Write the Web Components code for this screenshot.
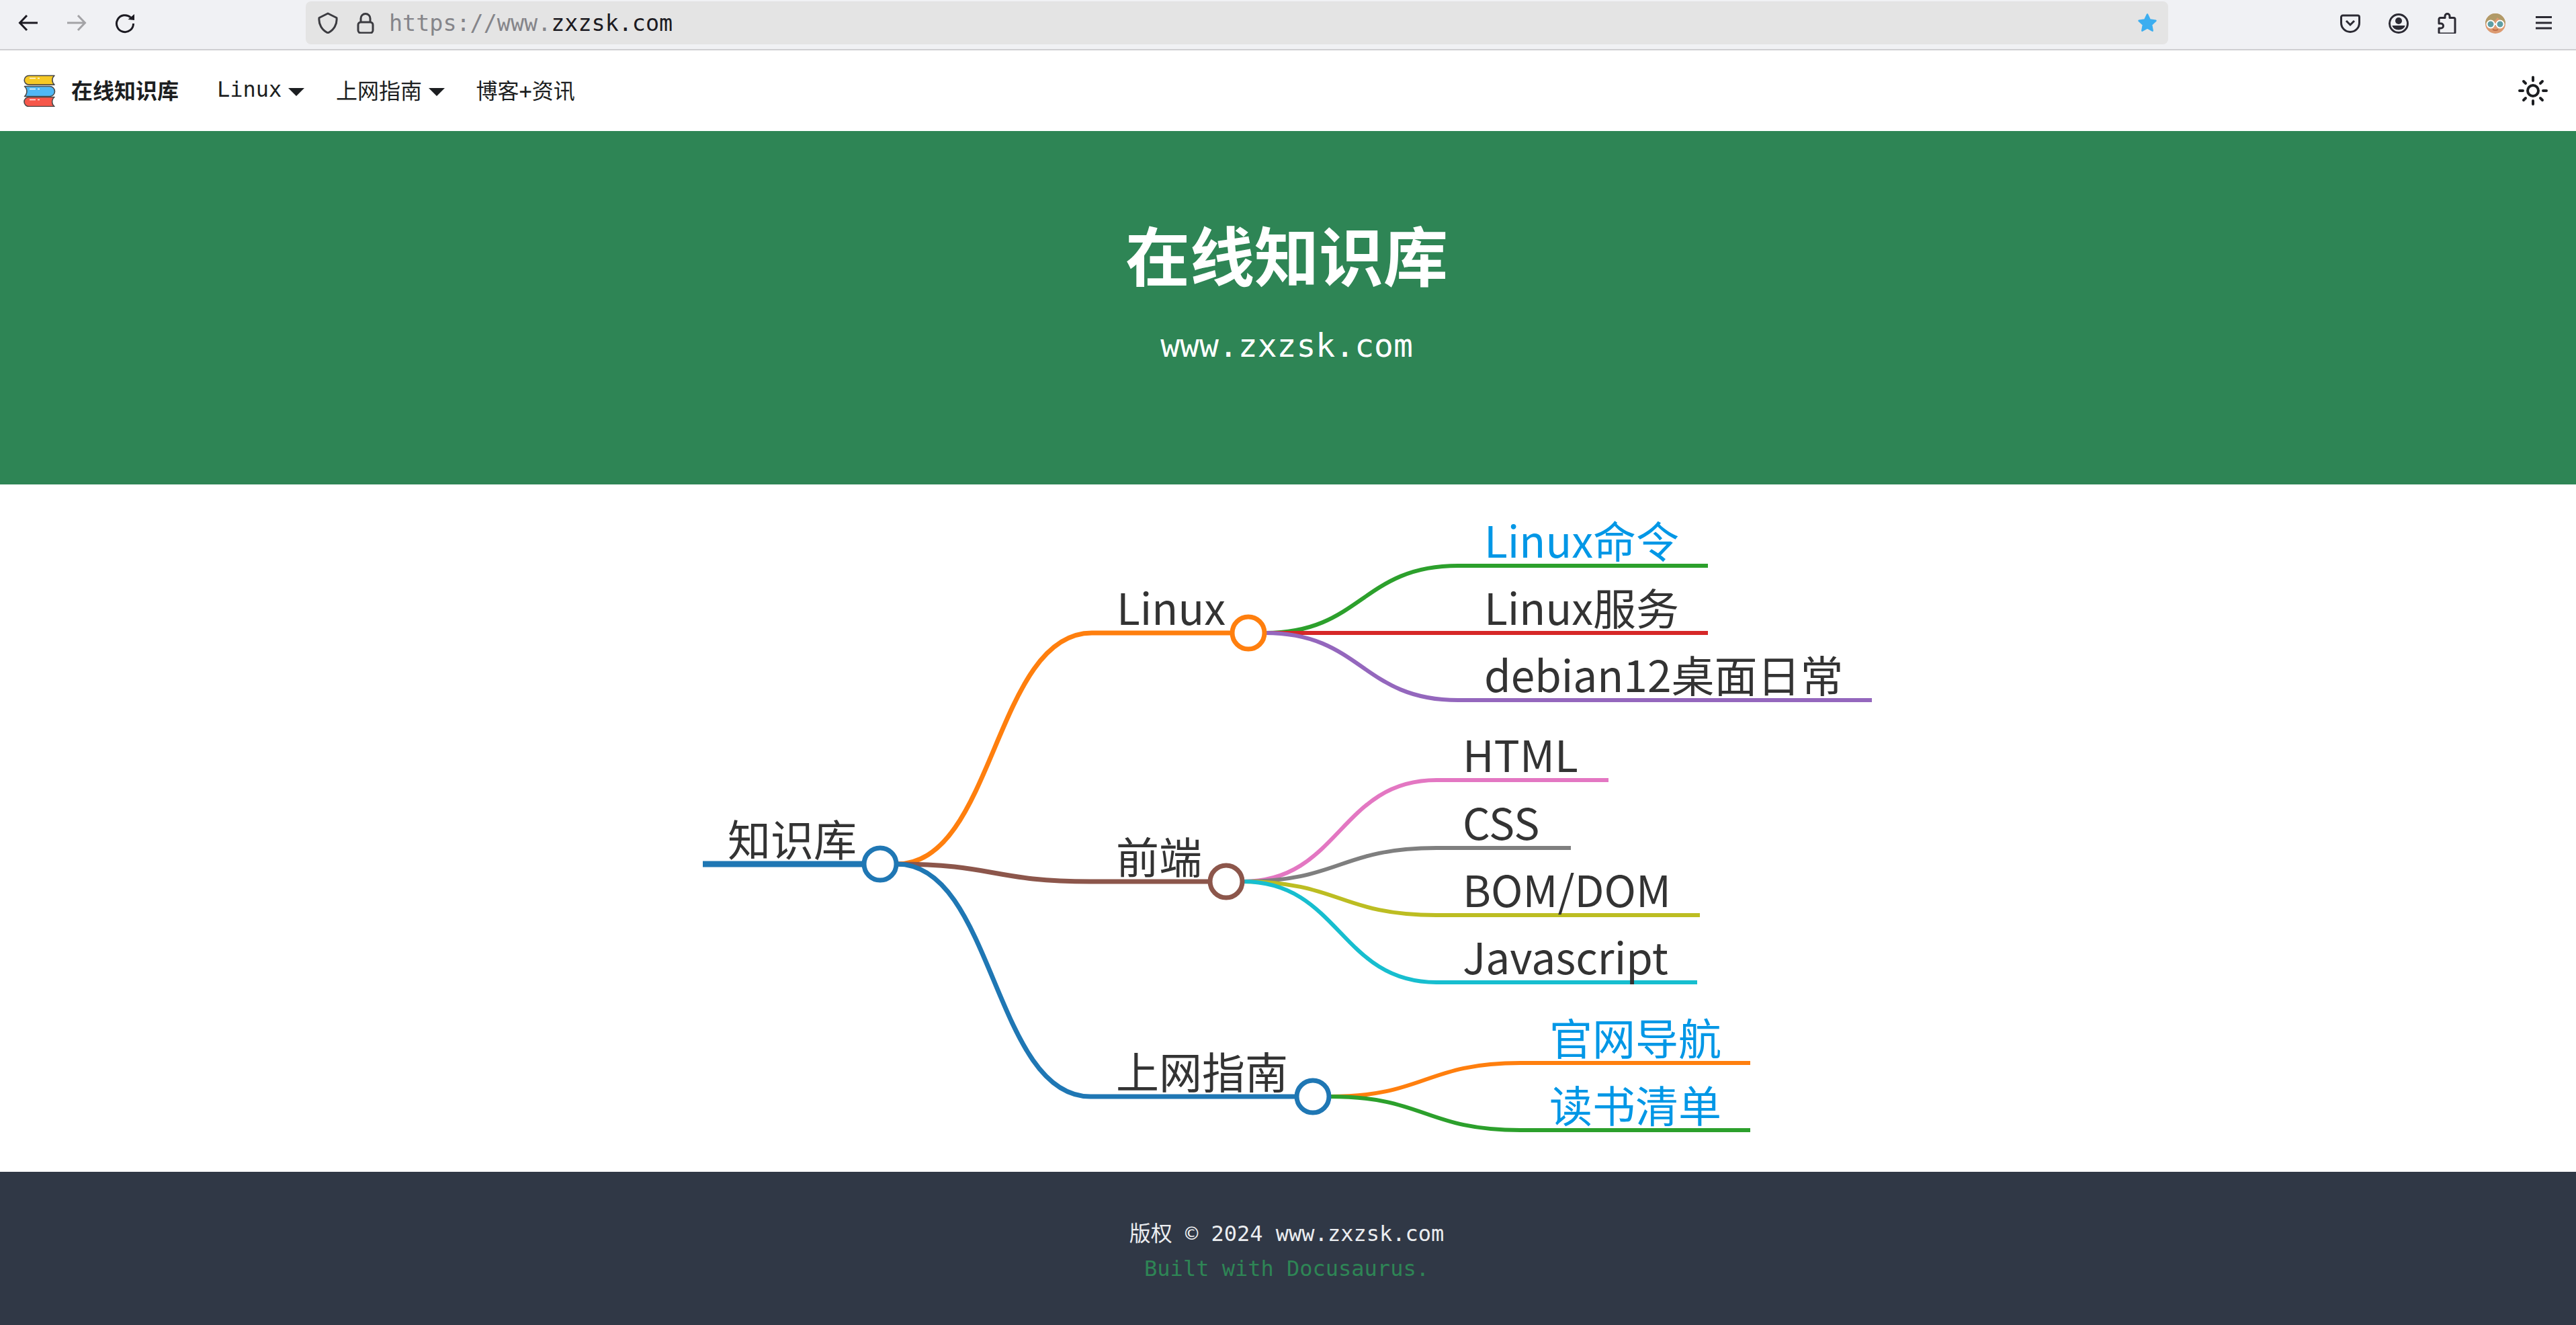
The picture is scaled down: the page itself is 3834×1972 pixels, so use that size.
<!DOCTYPE html>
<html lang="zh-CN">

<head>
    <meta charset="UTF-8">
    <meta name="viewport" content="width=device-width, initial-scale=1.0">
    <title>在线知识库</title>
</head>
<style>
    * {
        box-sizing: border-box;
    }
    html, body {
        margin: 0;
        background: #fff;
    }
    body {
        --mono: "DejaVu Sans Mono", "Noto Sans CJK SC", monospace;
        --cjk: "Noto Sans CJK SC", "Noto Sans", sans-serif;
        --primary: #2e8555;
        font-family: var(--mono);
        height: 1972px;
        display: flex;
        flex-direction: column;
        overflow: hidden;
    }
</style>

<body>
    <template class="browser-bar-tpl">
        <style>
            :host {
                display: flex;
                align-items: flex-start;
                height: 75px;
                flex-shrink: 0;
                background: #f0f1f4;
                border-bottom: 2px solid #cfcfd2;
                padding: 2px 32px 0 26px;
            }
            .group {
                display: flex;
                gap: 40px;
                height: 64px;
                align-items: center;
            }
            .url {
                flex: 1;
                height: 64px;
                margin: 0 255px 0 253px;
                padding: 0 15px 0 17px;
                border-radius: 8px;
                background: #e4e4e4;
                display: flex;
                align-items: center;
                gap: 24px;
            }
            .text {
                margin-left: -5px;
                font: 33.4px var(--mono);
                color: #1c1b22;
                white-space: nowrap;
            }
            .text span {
                color: #85858a;
            }
            .star {
                margin-left: auto;
            }
        </style>
        <div class="group">
            <tool-icon name="back"></tool-icon>
            <tool-icon name="forward"></tool-icon>
            <tool-icon name="reload"></tool-icon>
        </div>
        <div class="url">
            <tool-icon name="shield"></tool-icon>
            <tool-icon name="lock"></tool-icon>
            <div class="text"><span>https://www.</span>zxzsk.com</div>
            <tool-icon class="star" name="star"></tool-icon>
        </div>
        <div class="group">
            <tool-icon name="pocket"></tool-icon>
            <tool-icon name="account"></tool-icon>
            <tool-icon name="puzzle"></tool-icon>
            <tool-icon name="avatar"></tool-icon>
            <tool-icon name="menu"></tool-icon>
        </div>
    </template>

    <template class="site-nav-tpl">
        <style>
            :host {
                display: flex;
                align-items: center;
                height: 120px;
                flex-shrink: 0;
                padding: 0 42px 0 35px;
                background: #fff;
                color: #1c1e21;
            }
            .logo {
                width: 48px;
                height: 48px;
                margin-right: 23px;
            }
            .brand {
                font: bold 32px var(--cjk);
                margin: 0 33px 4px 0;
            }
            .sun {
                width: 44px;
                height: 44px;
                margin-left: auto;
            }
        </style>
        <svg class="logo" viewBox="0 0 48 48">
            <g stroke="#4a4a4a" stroke-width="1.6" stroke-linejoin="round">
                <path d="M46 1.5H8a6.8 6.8 0 0 0 0 13.600H46a9 9 0 0 1 0-13.600z" fill="#f6c925"/>
                <path d="M1.500 17.500H39a7.500 7.500 0 0 1 0 15H1.500a10 10 0 0 0 0-15z" fill="#4fb8f5"/>
                <path d="M46 33.500H8a7 7 0 0 0 0 14H46a9 9 0 0 1 0-14z" fill="#f6574a"/>
            </g>
            <g stroke="#fff" stroke-width="1.6" opacity=".9">
                <path d="M9 5.500h9M21 5.500h3M9 21.500h9M21 21.500h3M9 37.500h9M21 37.500h3"/>
            </g>
        </svg>
        <div class="brand">在线知识库</div>
        <slot></slot>
        <svg class="sun" viewBox="0 0 44 44" fill="none" stroke="#1c1e21" stroke-linecap="round">
            <circle cx="22" cy="22" r="8" stroke-width="4"/>
            <path stroke-width="4" d="M22 2v5M22 37v5M2 22h5M37 22h5M8 8l3 3M33 33l3 3M8 36l3-3M33 11l3-3"/>
        </svg>
    </template>

    <template class="nav-link-tpl">
        <style>
            :host {
                display: flex;
                align-items: center;
                padding: 0 23px 4px 24px;
                font: 32px var(--mono);
                white-space: nowrap;
            }
            .caret {
                display: none;
                margin-left: 9.6px;
                margin-top: 7px;
                border: 12.5px solid transparent;
                border-top-color: currentColor;
                border-bottom: 0;
            }
            :host([caret]) .caret {
                display: block;
            }
        </style>
        <slot></slot><span class="caret"></span>
    </template>

    <template class="site-hero-tpl">
        <style>
            :host {
                display: block;
                height: 526px;
                flex-shrink: 0;
                padding: 122px 4px 0 0;
                background: var(--primary);
                color: #fff;
                text-align: center;
            }
            h1 {
                margin: 0 0 47px;
                font: bold 96px/120px var(--cjk);
            }
            p {
                margin: 0;
                font: 48px/60px var(--mono);
            }
        </style>
        <h1><slot name="title"></slot></h1>
        <p><slot name="tagline"></slot></p>
    </template>

    <template class="site-footer-tpl">
        <style>
            :host {
                display: block;
                flex: 1;
                padding: 66px 4px 0 0;
                background: #303846;
                color: #ebedf0;
                text-align: center;
                font: 32px/52px var(--mono);
            }
            .built {
                color: var(--primary);
            }
        </style>
        <div><slot></slot></div>
        <div class="built"><slot name="built"></slot></div>
    </template>

    <browser-bar></browser-bar>
    <site-nav>
        <nav-link caret>Linux</nav-link>
        <nav-link caret>上网指南</nav-link>
        <nav-link>博客+资讯</nav-link>
    </site-nav>
    <site-hero>
        <span slot="title">在线知识库</span>
        <span slot="tagline">www.zxzsk.com</span>
    </site-hero>
    <mind-map></mind-map>
    <site-footer>
        版权 © 2024 www.zxzsk.com
        <span slot="built">Built with Docusaurus.</span>
    </site-footer>
</body>
<script>
    const ICONS = {
        back: '<path d="M30 16H4M14 5 3.500 16 14 27" fill="none" stroke="#1c1b22" stroke-width="3"/>',
        forward: '<path d="M2 16h26M18 5l10.500 11L18 27" fill="none" stroke="#a3a3a6" stroke-width="3"/>',
        reload: '<path d="M24.500 8A12.500 12.500 0 1 0 28.500 17" fill="none" stroke="#1c1b22" stroke-width="3"/><path d="M30 3v9l-9.500-1z" fill="#1c1b22"/>',
        shield: '<path d="M16 2 29 8.500C30 18 25 27 16 31 7 27 2 18 3 8.500z" fill="none" stroke="#3b3b40" stroke-width="3" stroke-linejoin="round"/>',
        lock: '<rect x="5" y="15" width="22" height="16" rx="4" fill="none" stroke="#3b3b40" stroke-width="3"/><path d="M9 15V9.500a7 7 0 0 1 14 0V15" fill="none" stroke="#3b3b40" stroke-width="3"/>',
        star: '<path d="M16 3.500 19.800 11.600 28.500 12.800 22.100 18.900 23.700 27.700 16 23.400 8.300 27.700 9.900 18.900 3.500 12.800 12.200 11.600z" fill="#3caef0" stroke="#3caef0" stroke-width="2.500" stroke-linejoin="round"/>',
        pocket: '<path d="M5 5h22a2.500 2.500 0 0 1 2.500 2.500V16a13.500 13.500 0 0 1-27 0V7.500A2.500 2.500 0 0 1 5 5z" fill="none" stroke="#2b2a33" stroke-width="3"/><path d="M10 13l6 6 6-6" fill="none" stroke="#2b2a33" stroke-width="3"/>',
        account: '<circle cx="16" cy="17" r="13.500" fill="none" stroke="#2b2a33" stroke-width="3"/><circle cx="16" cy="13" r="5" fill="#2b2a33"/><path d="M6.500 20h19a9.500 6.500 0 0 1-19 0z" fill="#2b2a33"/>',
        puzzle: '<path d="M13 8.500V6a3.500 3.500 0 0 1 7 0v2.500h6a2 2 0 0 1 2 2V30a2 2 0 0 1-2 2H6a2 2 0 0 1-2-2v-6h3a3.500 3.500 0 0 0 0-7H4v-6.500a2 2 0 0 1 2-2z" fill="none" stroke="#2b2a33" stroke-width="3" stroke-linejoin="round"/>',
        avatar: '<circle cx="16" cy="17" r="15" fill="#dc9a70"/><path d="M1 17a15 15 0 0 1 30 0l-3 1c-3-5-7-8-9-10-3 5-8 8-15 10z" fill="#b19a67"/><circle cx="9" cy="18" r="5.500" fill="#5f9ea4" stroke="#fff" stroke-width="2"/><circle cx="23" cy="18" r="5.500" fill="#5f9ea4" stroke="#fff" stroke-width="2"/><path d="M14 18h4" stroke="#fff" stroke-width="2"/><path d="M12 26q4 2 8 0" fill="none" stroke="#b5613f" stroke-width="1.500"/>',
        menu: '<path d="M4 7.500h24M4 16h24M4 24h24" stroke="#2b2a33" stroke-width="2.800"/>'
    };

    // small helper, every component clones its own template
    function shadowFrom(el, selector) {
        const root = el.attachShadow({ mode: 'open' });
        root.appendChild(document.querySelector(selector).content.cloneNode(true));
        return root;
    }

    customElements.define('tool-icon', class extends HTMLElement {
        constructor() {
            super();
            const root = this.attachShadow({ mode: 'open' });
            root.innerHTML = `<style>:host{display:block;width:32px;height:32px;flex-shrink:0}svg{display:block}</style>
                <svg width="32" height="32" viewBox="0 0 32 32">${ICONS[this.getAttribute('name')]}</svg>`;
        }
    });
    customElements.define('browser-bar', class extends HTMLElement {
        constructor() { super(); shadowFrom(this, '.browser-bar-tpl'); }
    });
    customElements.define('site-nav', class extends HTMLElement {
        constructor() { super(); shadowFrom(this, '.site-nav-tpl'); }
    });
    customElements.define('nav-link', class extends HTMLElement {
        constructor() { super(); shadowFrom(this, '.nav-link-tpl'); }
    });
    customElements.define('site-hero', class extends HTMLElement {
        constructor() { super(); shadowFrom(this, '.site-hero-tpl'); }
    });
    customElements.define('site-footer', class extends HTMLElement {
        constructor() { super(); shadowFrom(this, '.site-footer-tpl'); }
    });

    // x, y: node line; tx: label start; end: where the line stops
    const TREE = {
        label: '知识库', tx: 1083, x: 1046, y: 1286, cx: 1310, color: '#1f77b4', width: 9,
        children: [
            {
                label: 'Linux', tx: 1662, x: 1625, y: 942, cx: 1858, color: '#ff7f0e', width: 7,
                children: [
                    { label: 'Linux命令', tx: 2209, x: 2170, y: 842, end: 2542, color: '#2ca02c', link: true },
                    { label: 'Linux服务', tx: 2209, x: 2170, y: 942, end: 2542, color: '#d62728' },
                    { label: 'debian12桌面日常', tx: 2209, x: 2170, y: 1042, end: 2786, color: '#9467bd' }
                ]
            },
            {
                label: '前端', tx: 1661, x: 1623, y: 1312, cx: 1825, color: '#8c564b', width: 7,
                children: [
                    { label: 'HTML', tx: 2177, x: 2138, y: 1161, end: 2394, color: '#e377c2' },
                    { label: 'CSS', tx: 2177, x: 2138, y: 1262, end: 2338, color: '#7f7f7f' },
                    { label: 'BOM/DOM', tx: 2177, x: 2138, y: 1362, end: 2530, color: '#bcbd22' },
                    { label: 'Javascript', tx: 2177, x: 2138, y: 1462, end: 2526, color: '#17becf' }
                ]
            },
            {
                label: '上网指南', tx: 1661, x: 1623, y: 1632, cx: 1954, color: '#1f77b4', width: 7,
                children: [
                    { label: '官网导航', tx: 2306, x: 2263, y: 1582, end: 2605, color: '#ff7f0e', link: true },
                    { label: '读书清单', tx: 2306, x: 2263, y: 1682, end: 2605, color: '#2ca02c', link: true }
                ]
            }
        ]
    };

    customElements.define('mind-map', class extends HTMLElement {
        constructor() {
            super();
            const root = this.attachShadow({ mode: 'open' });
            let lines = '', circles = '', labels = '';
            const walk = (node, parent) => {
                const stop = node.cx || node.end;
                let d = `M${node.x} ${node.y}H${stop}`;
                if (parent) {
                    const sx = parent.cx + 25, mid = (sx + node.x) / 2;
                    d = `M${sx} ${parent.y}C${mid} ${parent.y} ${mid} ${node.y} ${node.x} ${node.y}H${stop}`;
                }
                lines += `<path d="${d}" stroke="${node.color}" stroke-width="${node.width || 6}"/>`;
                if (node.cx) {
                    circles += `<circle cx="${node.cx}" cy="${node.y}" r="24" fill="#fff" stroke="${node.color}" stroke-width="7"/>`;
                }
                labels += `<text x="${node.tx}" y="${node.y - 12}"${node.link ? ' class="link"' : ''}>${node.label}</text>`;
                (node.children || []).forEach(child => walk(child, node));
            };
            walk(TREE, null);
            root.innerHTML = `<style>
                    :host { display: block; height: 1023px; flex-shrink: 0; background: #fff; }
                    svg { display: block; }
                    path { fill: none; }
                    text { font: 64px "Noto Sans CJK SC", "Noto Sans", sans-serif; fill: #333; }
                    text.link { fill: #0097e6; }
                </style>
                <svg width="3834" height="1023" viewBox="0 721 3834 1023">
                    <g>${lines}</g><g>${circles}</g><g>${labels}</g>
                </svg>`;
        }
    });
</script>

</html>
